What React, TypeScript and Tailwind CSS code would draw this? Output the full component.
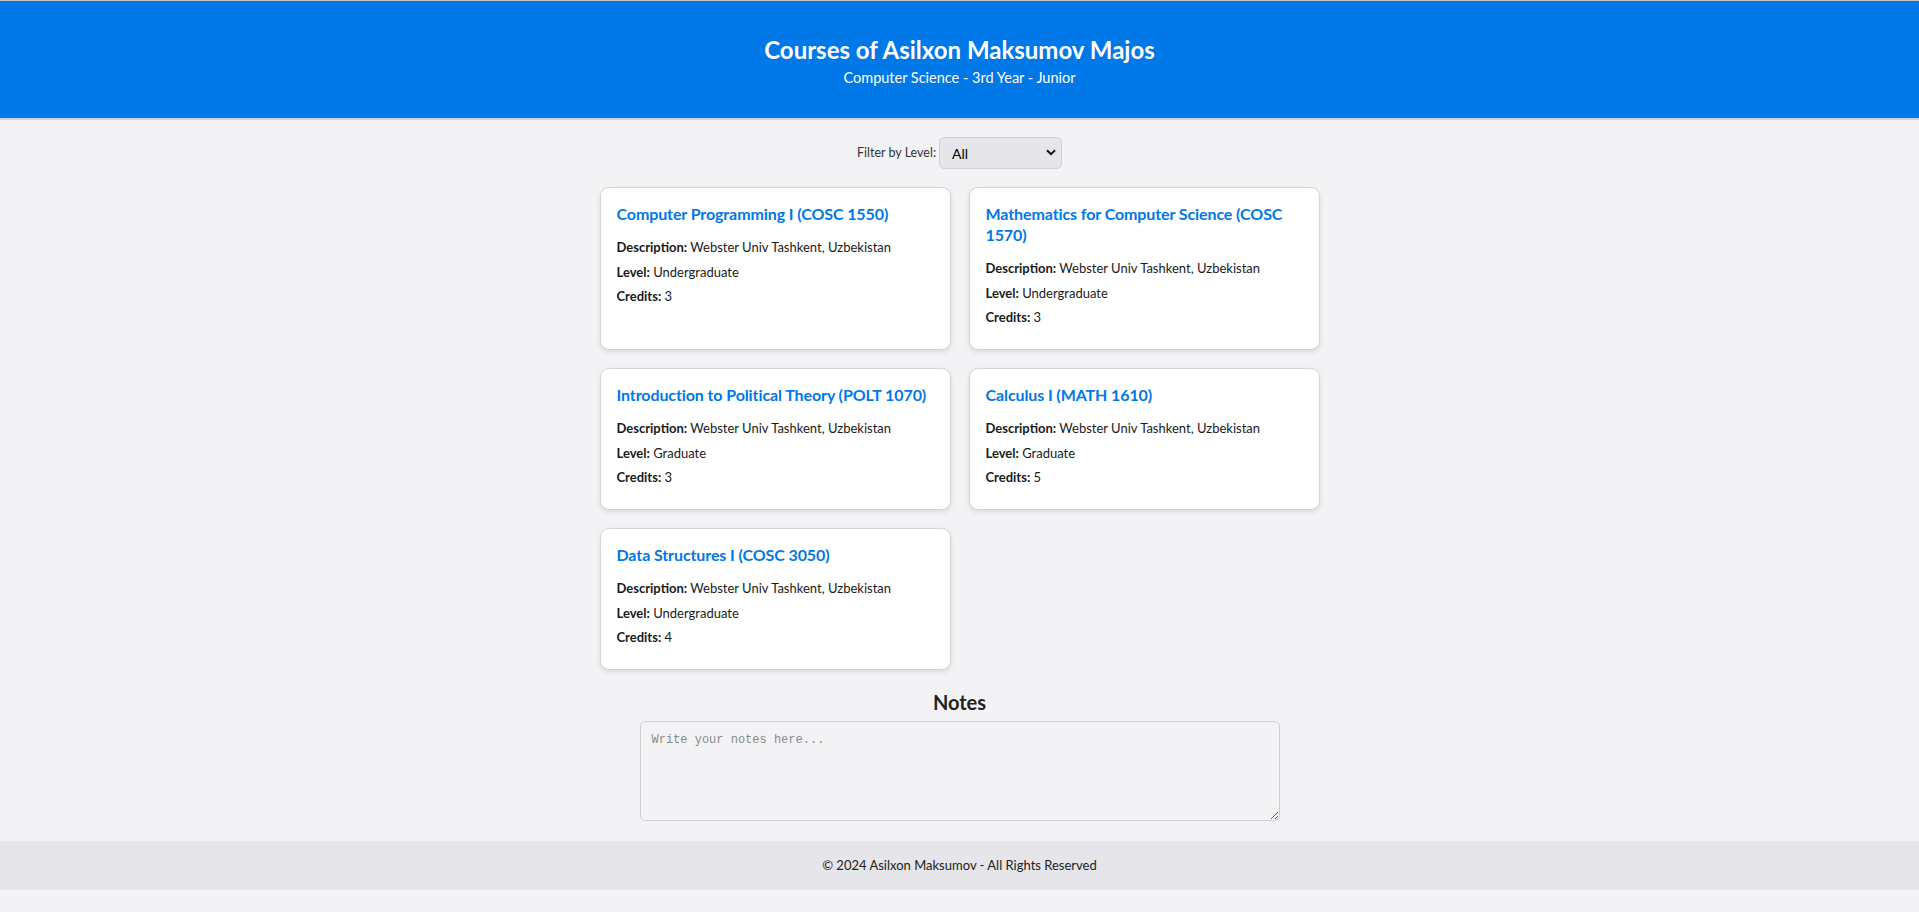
import { useState } from "react";

type Course = {
  id: number;
  title: string;
  description: string;
  level: string;
  credits: number;
};

const courses: Course[] = [
  { id: 1, title: "Computer Programming I (COSC 1550)", description: "Webster Univ Tashkent, Uzbekistan", level: "Undergraduate", credits: 3 },
  { id: 2, title: "Mathematics for Computer Science (COSC 1570)", description: "Webster Univ Tashkent, Uzbekistan", level: "Undergraduate", credits: 3 },
  { id: 3, title: "Introduction to Political Theory (POLT 1070)", description: "Webster Univ Tashkent, Uzbekistan", level: "Graduate", credits: 3 },
  { id: 4, title: "Calculus I (MATH 1610)", description: "Webster Univ Tashkent, Uzbekistan", level: "Graduate", credits: 5 },
  { id: 5, title: "Data Structures I (COSC 3050)", description: "Webster Univ Tashkent, Uzbekistan", level: "Undergraduate", credits: 4 },
];

function CourseCard({ course }: { course: Course }) {
  return (
    <div className="bg-white border border-[#d4d4d8] rounded-[9px] shadow-[0_2px_5px_rgba(0,0,0,0.1)] px-4 pt-[15px] pb-[22px]">
      <h3 className="text-[#0078e7] text-[16px] tracking-[-0.1px] font-bold leading-[21px] mb-[14px]">{course.title}</h3>
      <div className="flex flex-col gap-[5.5px] text-[13px] leading-[19px] text-[#1a1a1a]">
        <p>
          <span className="font-bold">Description:</span> {course.description}
        </p>
        <p>
          <span className="font-bold">Level:</span> {course.level}
        </p>
        <p>
          <span className="font-bold">Credits:</span> {course.credits}
        </p>
      </div>
    </div>
  );
}

export default function App() {
  const [level, setLevel] = useState("All");
  const shown = courses.filter((c) => level === "All" || c.level === level);

  return (
    <div className="min-h-screen bg-[#f3f3f6] font-['Lato',sans-serif] text-[#1a1a1a]">
      <header className="h-[120px] border-t border-t-[#c4c4c4] border-b-2 border-b-[#d2d2d6] bg-[#0078e7] text-white text-center pt-[33px]">
        <h1 className="text-[24px] font-bold leading-[32px]">Courses of Asilxon Maksumov Majos</h1>
        <p className="text-[14.5px] leading-[20px] mt-[2px]">Computer Science - 3rd Year - Junior</p>
      </header>

      <main className="flex flex-col items-center">
        <div className="mt-[17px] h-[32px] flex items-center gap-[3px] text-[12.5px] text-[#333]">
          <label htmlFor="level">Filter by Level:</label>
          <div className="relative">
            <select
              id="level"
              value={level}
              onChange={(e) => setLevel(e.target.value)}
              className="appearance-none w-[123px] h-[32px] rounded-[5px] border border-[#d0d0d5] bg-[#e5e5ea] pl-[12px] text-[14px] text-black outline-none"
            >
              <option>All</option>
              <option>Undergraduate</option>
              <option>Graduate</option>
            </select>
            <svg
              className="absolute right-[6px] top-[12px] pointer-events-none"
              width="10"
              height="7"
              viewBox="0 0 10 7"
              fill="none"
            >
              <path d="M1 1.2 5 5.2 9 1.2" stroke="#111" strokeWidth="2" />
            </svg>
          </div>
        </div>

        <div className="mt-[18px] w-[720px] grid grid-cols-2 gap-[18px]">
          {shown.map((c) => (
            <CourseCard key={c.id} course={c} />
          ))}
        </div>

        <h2 className="mt-[18px] text-[20px] font-bold leading-[28px] text-[#222]">Notes</h2>
        <textarea
          placeholder="Write your notes here..."
          className="mt-[5px] w-[640px] h-[100px] rounded-[5px] border border-[#d0d0d5] bg-[#f3f3f6] px-[11px] py-[9px] font-['Liberation_Mono',monospace] text-[12px] placeholder:text-[#8a8a8a] outline-none"
        />
      </main>

      <footer className="mt-[20px] h-[49px] bg-[#e5e5ea] flex items-center justify-center text-[13px] text-[#222]">
        © 2024 Asilxon Maksumov - All Rights Reserved
      </footer>
      <div className="h-[23px]" />
    </div>
  );
}
